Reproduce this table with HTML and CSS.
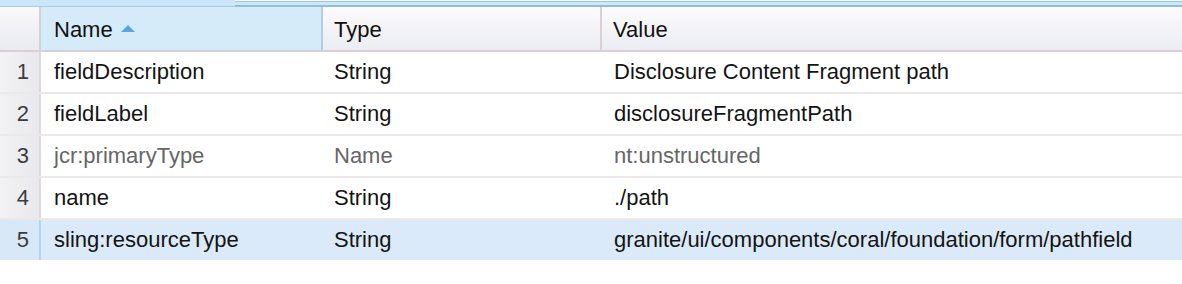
FILE: index.html
```html
<!DOCTYPE html>
<html>
<head>
<meta charset="utf-8">
<link rel="stylesheet" href="styles.css">
</head>
<body>
<div class="topbar"><div class="tb-left"></div><div class="tb-right"></div></div>
<div class="grid">
  <div class="row head">
    <div class="num"></div>
    <div class="cell c-name sel">Name <span class="arrow"></span></div>
    <div class="cell c-type">Type</div>
    <div class="cell c-val">Value</div>
  </div>
  <div class="row">
    <div class="num">1</div>
    <div class="cell c-name">fieldDescription</div>
    <div class="cell c-type">String</div>
    <div class="cell c-val">Disclosure Content Fragment path</div>
  </div>
  <div class="row">
    <div class="num">2</div>
    <div class="cell c-name">fieldLabel</div>
    <div class="cell c-type">String</div>
    <div class="cell c-val">disclosureFragmentPath</div>
  </div>
  <div class="row dim">
    <div class="num">3</div>
    <div class="cell c-name">jcr:primaryType</div>
    <div class="cell c-type">Name</div>
    <div class="cell c-val">nt:unstructured</div>
  </div>
  <div class="row">
    <div class="num">4</div>
    <div class="cell c-name">name</div>
    <div class="cell c-type">String</div>
    <div class="cell c-val">./path</div>
  </div>
  <div class="row active">
    <div class="num">5</div>
    <div class="cell c-name">sling:resourceType</div>
    <div class="cell c-type">String</div>
    <div class="cell c-val">granite/ui/components/coral/foundation/form/pathfield</div>
  </div>
</div>
</body>
</html>
```

FILE: styles.css
```css
html, body {
  margin: 0;
  padding: 0;
  background: #ffffff;
}
body {
  font-family: "Liberation Sans", Arial, Helvetica, sans-serif;
  font-size: 22px;
  color: #141414;
}
.topbar {
  display: flex;
  height: 7px;
}
.tb-left {
  width: 235px;
  background: #cbe6f8;
  border-bottom: 1px solid #a6cbe4;
}
.tb-right {
  flex: 1;
  background: #cde8f8;
  border-top: 1px solid #9cc6e2;
  border-bottom: 2px solid #92bedb;
  margin-top: 1px;
}
.grid {
  display: flex;
  flex-direction: column;
}
.row {
  display: grid;
  grid-template-columns: 41px 282px 279px 1fr;
  height: 40px;
  border-bottom: 2px solid #ece8e9;
  background: #ffffff;
}
.row > div {
  display: flex;
  align-items: center;
  white-space: nowrap;
  overflow: hidden;
}
.num {
  justify-content: flex-end;
  padding-right: 10px;
  background: linear-gradient(to right, #f2f2f4, #e9e9ed);
  border-right: 2px solid #ddd8db;
  color: #3c3c3c;
}
.cell {
  padding-left: 13px;
}
.c-type { padding-left: 11px; }
.c-val { padding-left: 12px; }
.head {
  height: 43px;
  border-bottom: 2px solid #dacfd3;
  background: linear-gradient(to bottom, #fcfbfc 0%, #f5f4f7 40%, #eaedf3 100%);
}
.head .num {
  background: linear-gradient(to bottom, #fbfafb 0%, #f2f2f5 40%, #e8ebf1 100%);
  border-right: 2px solid #d8cfd2;
}
.head .cell {
  padding-top: 2px;
  color: #111;
}
.head .c-name.sel {
  background: #d6ebfa;
  border-right: 2px solid #a9d1ee;
  padding-left: 13px;
}
.head .c-type {
  border-right: 2px solid #d8d0d3;
  margin-left: 1px;
  padding-left: 10px;
}
.head .c-val {
  padding-left: 11px;
}
.arrow {
  display: inline-block;
  width: 0;
  height: 0;
  margin-left: 8px;
  margin-top: -2px;
  border-left: 7px solid transparent;
  border-right: 7px solid transparent;
  border-bottom: 7px solid #56a6e2;
}
.dim .cell {
  color: #666666;
}
.active {
  background: #dbeaf8;
  border-bottom: none;
}
.active .num {
  background: #d9e8f6;
  border-right: 2px solid #b3d5f0;
}
```
